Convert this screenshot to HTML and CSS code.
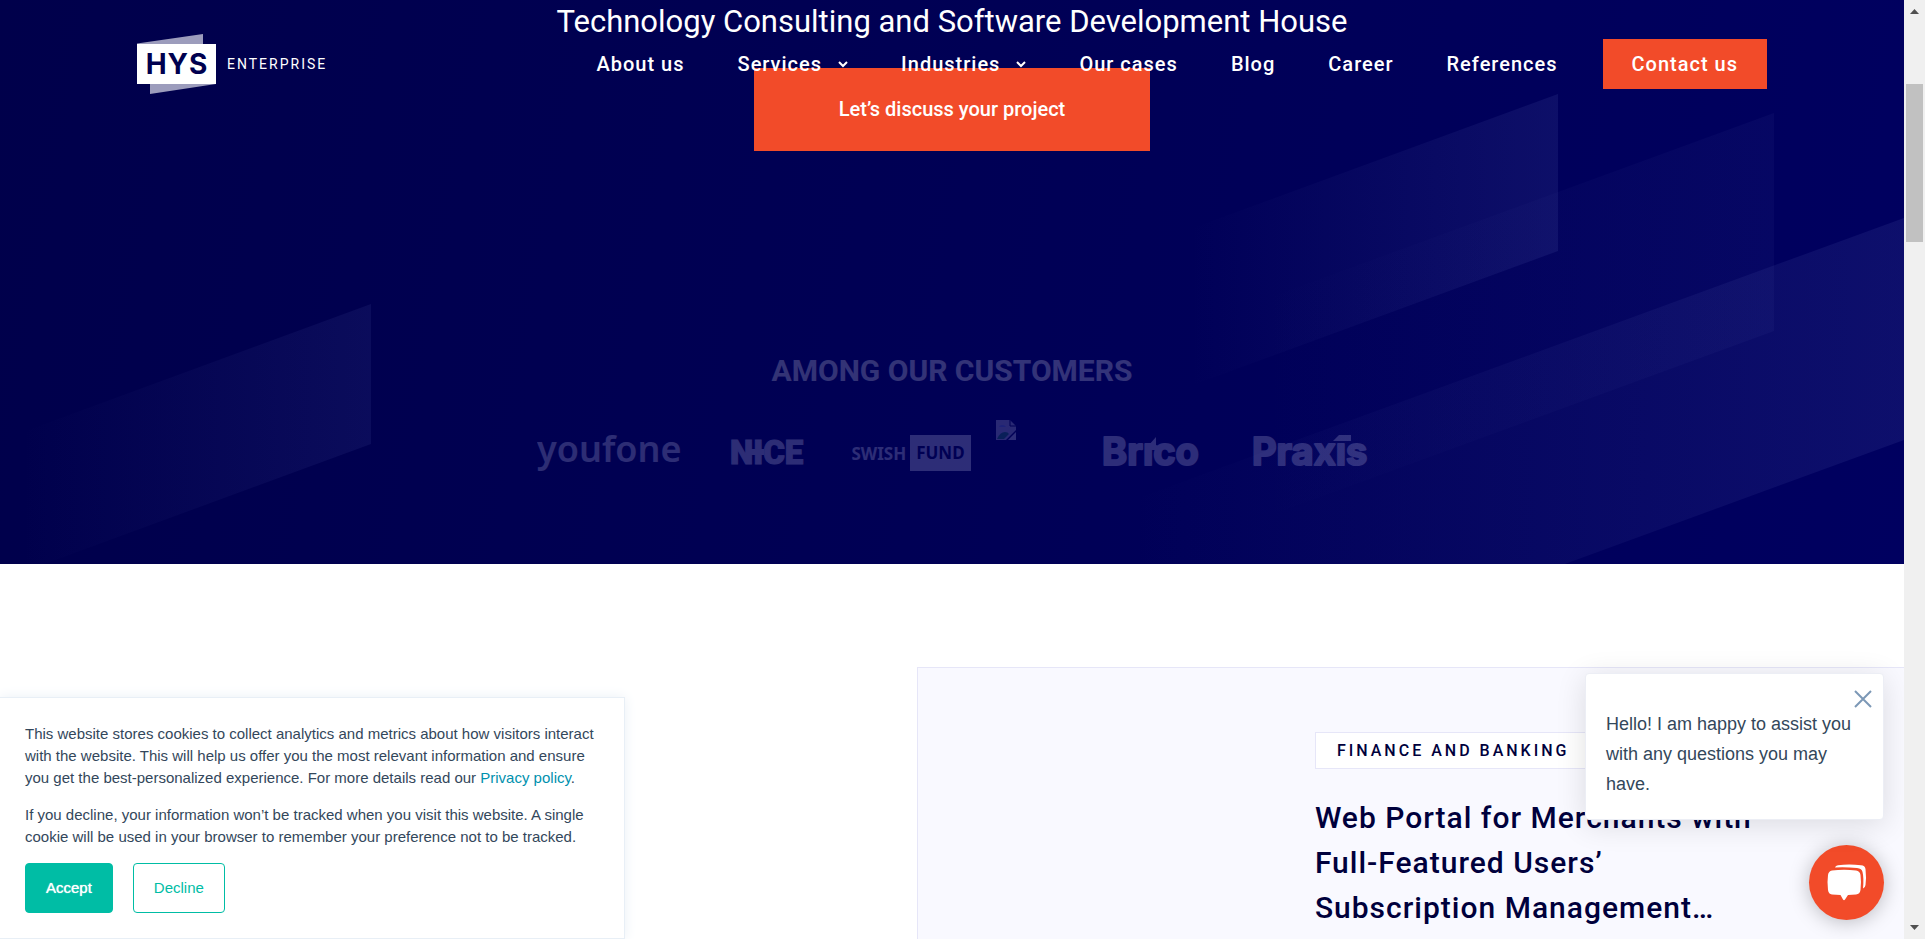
FILE: index.html
```html
<!DOCTYPE html>
<html lang="en">
<head>
<meta charset="utf-8">
<title>HYS Enterprise</title>
<link rel="stylesheet" href="styles.css">
</head>
<body>
<div class="shell">
  <div class="page">
    <header class="header">
      <a class="logo" href="#" aria-label="HYS Enterprise">
        <svg class="logo-mark" width="79" height="60" viewBox="0 0 79 60">
          <path d="M0 9.500 66 0V10H0Z M13 50H79L13 60Z" fill="#9c9cbc"/>
          <rect y="10" width="79" height="40" fill="#fff"/>
          <text class="logo-text" x="40" y="40" text-anchor="middle">HYS</text>
        </svg>
        <span class="logo-name">ENTERPRISE</span>
      </a>
      <nav class="nav">
        <a href="#">About us</a>
        <a href="#">Services <svg class="chev" width="10" height="7" viewBox="0 0 10 7"><path d="M1 1l4 4 4-4"/></svg></a>
        <a href="#">Industries <svg class="chev" width="10" height="7" viewBox="0 0 10 7"><path d="M1 1l4 4 4-4"/></svg></a>
        <a href="#">Our cases</a>
        <a href="#">Blog</a>
        <a href="#">Career</a>
        <a href="#">References</a>
        <a class="contact" href="#">Contact us</a>
      </nav>
    </header>
    <main>
      <section class="hero">
        <svg class="hero-art" viewBox="0 0 1904 564" preserveAspectRatio="none" aria-hidden="true">
          <defs>
            <linearGradient id="g1"><stop offset="0" stop-color="#5a64b4" stop-opacity="0"/><stop offset="1" stop-color="#5a64b4" stop-opacity=".12"/></linearGradient>
            <linearGradient id="g2"><stop offset="0" stop-color="#5a64b4" stop-opacity="0"/><stop offset="1" stop-color="#5a64b4" stop-opacity=".15"/></linearGradient>
            <linearGradient id="g3"><stop offset="0" stop-color="#5a64b4" stop-opacity="0"/><stop offset="1" stop-color="#5a64b4" stop-opacity=".07"/></linearGradient>
          </defs>
          <path fill="url(#g1)" d="M20 433 371 304V444L20 573Z"/>
          <path fill="url(#g2)" d="M1190 229 1558 94V251L1190 386Z"/>
          <path fill="url(#g3)" d="M1260 301 1774 113V331L1260 519Z"/>
          <path fill="url(#g2)" d="M1130 501 1904 218V440L1130 723Z"/>
        </svg>
        <div class="hero-content">
          <h1 class="hero-title">Technology Consulting and Software Development House</h1>
          <a class="cta" href="#">Let’s discuss your project</a>
          <div class="customers">
            <h2 class="customers-title">AMONG OUR CUSTOMERS</h2>
            <div class="brands">
              <svg width="143" height="44" viewBox="0 0 143 44"><text class="b-youfone" x="0" y="31">youfone</text></svg>
              <svg width="71" height="44" viewBox="0 0 71 44"><text class="b-nice" x="0" y="33">NICE</text><path d="M18 18h16v6H18z"/></svg>
              <div class="swish"><span>SWISH</span><span class="fund">FUND</span></div>
              <svg class="broken" width="20" height="20" viewBox="0 0 20 20"><path d="M0 0h14l6 6v4L10 20H0z" opacity=".9"/><path d="M14 0v6h6" fill="none" stroke="#00004f"/><path d="M3 7q1-2 3-2 3 0 4 2z" fill="#8fa8ff"/><path d="M1 19q3-7 8-7 3 0 4 2l-5 5z" fill="#2f9b68"/><path d="M20 12v8h-8z"/></svg>
              <svg width="100" height="44" viewBox="0 0 100 44"><text class="b-round" x="0" y="34">Brıco</text><path d="M46 15 54 6v8l3 1v4H46z"/></svg>
              <svg width="115" height="44" viewBox="0 0 115 44"><text class="b-round" x="0" y="34">Praxıs</text><path d="M81 10 87 4H99V10Z"/></svg>
            </div>
          </div>
        </div>
      </section>
      <section class="cases">
        <article class="case">
          <span class="tag">FINANCE AND BANKING</span>
          <h2 class="case-title">Web Portal for Merchants with Full-Featured Users’ Subscription Management…</h2>
        </article>
      </section>
    </main>
    <aside class="cookie">
      <p>This website stores cookies to collect analytics and metrics about how visitors interact with the website. This will help us offer you the most relevant information and ensure you get the best-personalized experience. For more details read our <a href="#">Privacy policy</a>.</p>
      <p>If you decline, your information won’t be tracked when you visit this website. A single cookie will be used in your browser to remember your preference not to be tracked.</p>
      <div class="cookie-actions">
        <button class="accept" type="button">Accept</button>
        <button class="decline" type="button">Decline</button>
      </div>
    </aside>
    <aside class="chat">
      <div class="chat-card">
        <button class="chat-close" type="button" aria-label="Close"><svg width="18" height="18" viewBox="0 0 18 18"><path d="M1 1 17 17M17 1 1 17"/></svg></button>
        <p>Hello! I am happy to assist you with any questions you may have.</p>
      </div>
      <button class="chat-open" type="button" aria-label="Open chat">
        <svg width="40" height="38" viewBox="0 0 40 38"><path fill="#fff" d="M5 6.500Q17 5 29 6.500 33 7 33.500 11 34.500 18 33.500 26 33 30 29 30.500L21 31 18 35.500Q17 37 16 35.500L13.500 31 5 30.500Q1.500 30 1 26 0 18 1 11 1.500 7 5 6.500Z"/><path fill="#fff" d="M8 3.500Q8.500 1.500 11 1.200 22 0 34 1.200 38 1.500 38.500 5 39.500 14 38.500 21 38.200 24 36 24.500 37 14 35.500 8 35 4.500 30 4 19 3 8 3.500Z"/></svg>
      </button>
    </aside>
  </div>
  <div class="scrollbar" aria-hidden="true">
    <svg width="9" height="5" viewBox="0 0 9 5"><path d="M0 5 4.500 0 9 5Z"/></svg>
    <div class="track"><div class="thumb"></div></div>
    <svg width="9" height="5" viewBox="0 0 9 5"><path d="M0 0H9L4.500 5Z"/></svg>
  </div>
</div>
</body>
</html>
```
FILE: styles.css
```css
* { box-sizing: border-box; }
body { margin: 0; overflow: hidden; background: #fff; font-family: Roboto, "Liberation Sans", sans-serif; }
h1, h2, p { margin: 0; }
a { text-decoration: none; }
button { font: inherit; cursor: pointer; }

.shell { display: flex; height: 100vh; }
.page { position: relative; flex: 1; min-width: 0; overflow: hidden; }

.header { position: absolute; z-index: 2; top: 0; left: 0; right: 0; display: flex; align-items: center; justify-content: space-between; padding: 34px 137px 0; }
.logo { display: flex; align-items: center; gap: 11px; color: #fff; }
.logo-text { font: 700 28px Inter, sans-serif; letter-spacing: 1px; fill: #00004f; }
.logo-name { font-size: 14px; letter-spacing: 2px; }
.nav { display: flex; align-items: center; gap: 53px; color: #fff; font-size: 20px; font-weight: 500; letter-spacing: 1px; line-height: 50px; }
.nav a { display: flex; align-items: center; gap: 16px; color: inherit; }
.nav .contact { margin-left: -8px; padding: 0 29px; background: #f24b29; }
.chev { fill: none; stroke: #fff; stroke-width: 2; }

.hero { position: relative; height: 564px; background: linear-gradient(100deg, #00004b, #000055 50%, #000060); }
.hero-art { position: absolute; inset: 0; width: 100%; height: 100%; }
.hero-content { position: relative; display: flex; flex-direction: column; align-items: center; }
.hero-title { padding-top: 4px; color: #fff; font-size: 31px; font-weight: 400; line-height: 36px; }
.cta { width: 396px; margin-top: 28px; background: #f24b29; color: #fff; font-size: 20px; font-weight: 500; line-height: 83px; text-align: center; }
.customers { display: flex; flex-direction: column; align-items: center; margin-top: 202px; opacity: .2; color: #fff; }
.customers-title { font-size: 30px; font-weight: 700; line-height: 36px; }
.brands { display: flex; align-items: center; margin-top: 42px; gap: 50px; fill: #e0e0ff; }
.brands svg { overflow: visible; }
.b-youfone { font: 600 36px "Noto Sans", sans-serif; }
.b-nice { font: 900 33px Roboto, sans-serif; stroke: #e0e0ff; stroke-width: 1; }
.b-round { font: 700 38px Inter, sans-serif; stroke: #e0e0ff; stroke-width: 2; stroke-linejoin: round; }
.swish { display: flex; align-items: center; gap: 4px; font: 700 17px "Noto Sans", sans-serif; color: #e0e0ff; }
.fund { padding: 0 6px; background: #e0e0ff; color: #00004f; line-height: 36px; }
.brands .broken { align-self: flex-start; margin: -11px 36px 0 -25px; }

.cases { display: flex; padding: 103px 0 0 48%; }
.case { flex: 1; margin-left: 3px; padding: 64px 20px 40px 397px; border: 1px solid #e6e6f8; border-right: 0; background: #f9f9ff; color: #00003c; }
.tag { display: inline-block; padding: 0 21px; border: 1px solid #e6e6f8; background: #fff; font-size: 16px; font-weight: 500; line-height: 35px; letter-spacing: 3px; white-space: nowrap; }
.case-title { max-width: 450px; margin-top: 26px; font-size: 30px; font-weight: 500; line-height: 45px; letter-spacing: 1px; }

.cookie { position: absolute; z-index: 3; left: 0; bottom: 0; width: 625px; padding: 25px 24px 25px 25px; border: 1px solid #e8eff6; border-left: 0; background: #fff; box-shadow: 0 0 12px #eaf0f6; color: #33475b; font: 15px/22px "Liberation Sans", Arial, sans-serif; }
.cookie p { margin-bottom: 15px; }
.cookie a { color: #0091ae; }
.cookie-actions { display: flex; gap: 20px; }
.cookie button { height: 50px; padding: 0 20px; border: 1px solid #00bda5; border-radius: 4px; background: #fff; color: #00bda5; }
.cookie .accept { background: #00bda5; color: #fff; text-shadow: 0 0 1px #fff; }

.chat { position: absolute; z-index: 3; right: 20px; bottom: 19px; display: flex; flex-direction: column; align-items: flex-end; gap: 25px; }
.chat-card { position: relative; width: 299px; padding: 35px 20px 20px; border: 1px solid #eceef5; border-radius: 4px; background: #fff; box-shadow: 0 5px 30px rgba(0, 0, 0, .12); color: #33475b; font: 18px/30px "Liberation Sans", Arial, sans-serif; }
.chat-close { position: absolute; top: 16px; right: 11px; display: flex; padding: 0; border: 0; background: none; }
.chat-close path { stroke: #7c98b6; stroke-width: 2; }
.chat-open { display: grid; place-items: center; width: 75px; height: 75px; padding: 0; border: 0; border-radius: 50%; background: #f24b29; box-shadow: 0 2px 20px rgba(0, 0, 0, .25); }

.scrollbar { display: flex; flex-direction: column; align-items: center; justify-content: space-between; gap: 70px; width: 21px; padding: 9px 0; background: #f0f0f0; fill: #505050; }
.track { flex: 1; align-self: stretch; padding: 0 2px; }
.thumb { height: 158px; background: #c1c1c1; }
```
